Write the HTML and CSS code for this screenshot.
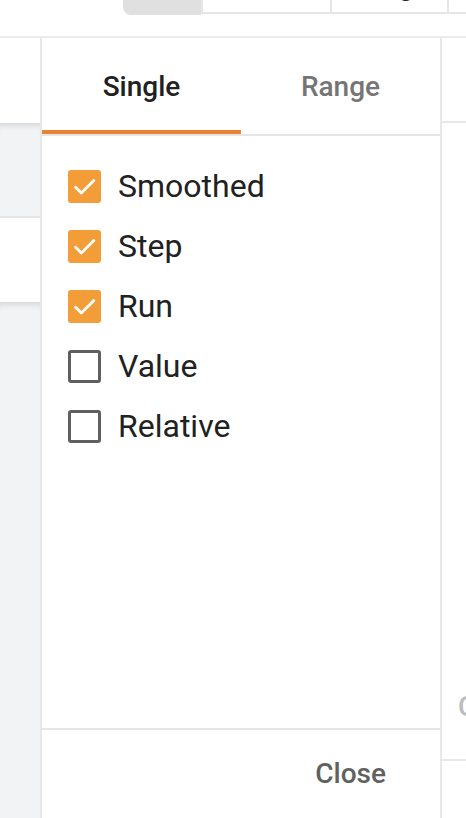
FILE: index.html
```html
<!DOCTYPE html>
<html>
<head>
<meta charset="utf-8">
<link rel="stylesheet" href="styles.css">
</head>
<body>
<div class="page">
  <div class="topbar">
    <div class="seg seg-active"></div>
    <div class="seg seg-cell"><span class="seg-label seg-hidden">Relative</span></div>
    <div class="seg seg-cell seg-cell3"><span class="seg-label">Range</span></div>
    <div class="seg seg-cell seg-last"></div>
  </div>
  <div class="spacer"></div>
  <div class="rule"></div>
  <div class="main">
    <div class="left">
      <div class="l-white1"></div>
      <div class="l-gray1"></div>
      <div class="l-white2"></div>
      <div class="l-gray2"></div>
    </div>
    <div class="dialog">
      <div class="tabs">
        <div class="tab tab-active">Single</div>
        <div class="tab">Range</div>
      </div>
      <div class="list">
        <label class="row"><span class="box box-on"><svg viewBox="0 0 24 24" width="33" height="33"><path d="M5.5 12.5l4.2 4.2L18.8 7.6" fill="none" stroke="#fff" stroke-width="2" stroke-linecap="round" stroke-linejoin="round"/></svg></span><span class="lbl">Smoothed</span></label>
        <label class="row"><span class="box box-on"><svg viewBox="0 0 24 24" width="33" height="33"><path d="M5.5 12.5l4.2 4.2L18.8 7.6" fill="none" stroke="#fff" stroke-width="2" stroke-linecap="round" stroke-linejoin="round"/></svg></span><span class="lbl">Step</span></label>
        <label class="row"><span class="box box-on"><svg viewBox="0 0 24 24" width="33" height="33"><path d="M5.5 12.5l4.2 4.2L18.8 7.6" fill="none" stroke="#fff" stroke-width="2" stroke-linecap="round" stroke-linejoin="round"/></svg></span><span class="lbl">Run</span></label>
        <label class="row"><span class="box box-off"></span><span class="lbl">Value</span></label>
        <label class="row"><span class="box box-off"></span><span class="lbl">Relative</span></label>
      </div>
      <div class="footer">
        <span class="close">Close</span>
      </div>
    </div>
    <div class="right">
      <div class="r-top"></div>
      <div class="r-mid"><span class="r-glyph">C</span></div>
      <div class="r-bot"></div>
    </div>
  </div>
</div>
</body>
</html>
```

FILE: styles.css
```css
html, body {
  margin: 0;
  padding: 0;
  background: #ffffff;
}
.page {
  width: 466px;
  height: 818px;
  overflow: hidden;
  display: flex;
  flex-direction: column;
  font-family: Roboto, "Liberation Sans", sans-serif;
}
.topbar {
  height: 15px;
  display: flex;
  padding-left: 123px;
  flex-shrink: 0;
}
.seg {
  height: 15px;
  box-sizing: border-box;
  flex-shrink: 0;
}
.seg-active {
  width: 78px;
  background: #e0e0e0;
  border-bottom-left-radius: 8px;
}
.seg-cell {
  width: 129px;
  height: 14px;
  border-left: 2px solid #e6e6e6;
  border-bottom: 2px solid #e6e6e6;
  overflow: hidden;
  display: flex;
  justify-content: center;
  align-items: flex-end;
}
.seg-cell3 {
  width: 117px;
}
.seg-last {
  flex: 1 1 auto;
  width: auto;
}
.seg-label {
  font-size: 28px;
  font-weight: 500;
  color: #212121;
  line-height: 32px;
  margin-bottom: 10px;
  white-space: nowrap;
}
.seg-hidden {
  visibility: hidden;
}
.spacer {
  height: 21px;
  flex-shrink: 0;
}
.rule {
  height: 2px;
  background: #ebebeb;
  flex-shrink: 0;
}
.main {
  flex: 1;
  display: flex;
  min-height: 0;
}
.left {
  width: 40px;
  flex-shrink: 0;
  display: flex;
  flex-direction: column;
}
.l-white1 {
  height: 85px;
  background: #ffffff;
}
.l-gray1 {
  height: 93px;
  background: #f2f3f5;
  border-bottom: 2px solid #e6e6e6;
  box-shadow: inset 0 7px 6px -5px rgba(0, 0, 0, 0.14);
}
.l-white2 {
  height: 84px;
  background: #ffffff;
}
.l-gray2 {
  flex: 1;
  background: #f2f3f5;
  box-shadow: inset 0 7px 6px -5px rgba(0, 0, 0, 0.14);
}
.dialog {
  width: 398px;
  flex-shrink: 0;
  border-left: 2px solid #e8e8e8;
  border-right: 2px solid #e8e8e8;
  background: #ffffff;
  display: flex;
  flex-direction: column;
}
.tabs {
  display: flex;
  border-bottom: 2px solid #e6e6e6;
}
.tab {
  flex: 1;
  text-align: center;
  font-size: 28px;
  font-weight: 500;
  line-height: 32px;
  padding-top: 33px;
  padding-bottom: 27px;
  border-bottom: 4px solid transparent;
  color: #757575;
}
.tab-active {
  color: #212121;
  border-bottom-color: #e8832f;
}
.list {
  flex: 1;
  padding-top: 20px;
  padding-left: 26px;
  display: flex;
  flex-direction: column;
}
.row {
  height: 60px;
  display: flex;
  align-items: center;
}
.box {
  width: 33px;
  height: 33px;
  box-sizing: border-box;
  border-radius: 3px;
  flex-shrink: 0;
  display: flex;
}
.box-on {
  background: #f29d38;
}
.box-off {
  border: 3.5px solid #5f5f5f;
}
.lbl {
  margin-left: 17px;
  font-size: 32px;
  line-height: 60px;
  color: #212121;
}
.footer {
  height: 90px;
  border-top: 2px solid #e6e6e6;
  display: flex;
  justify-content: flex-end;
  align-items: flex-start;
  padding-top: 28px;
  padding-right: 54px;
  box-sizing: border-box;
}
.close {
  font-size: 28px;
  font-weight: 500;
  line-height: 32px;
  color: #616161;
}
.right {
  flex: 1;
  min-width: 0;
  overflow: hidden;
  display: flex;
  flex-direction: column;
}
.r-top {
  height: 83px;
  border-bottom: 2px solid #e8e8e8;
}
.r-mid {
  height: 638px;
  border-bottom: 2px solid #e8e8e8;
  overflow: hidden;
  display: flex;
  flex-direction: column;
  justify-content: flex-end;
  padding-left: 16px;
  box-sizing: border-box;
  padding-bottom: 36px;
}
.r-glyph {
  font-size: 28px;
  font-weight: 500;
  line-height: 32px;
  color: #bdbdbd;
}
.r-bot {
  flex: 1;
}
```
